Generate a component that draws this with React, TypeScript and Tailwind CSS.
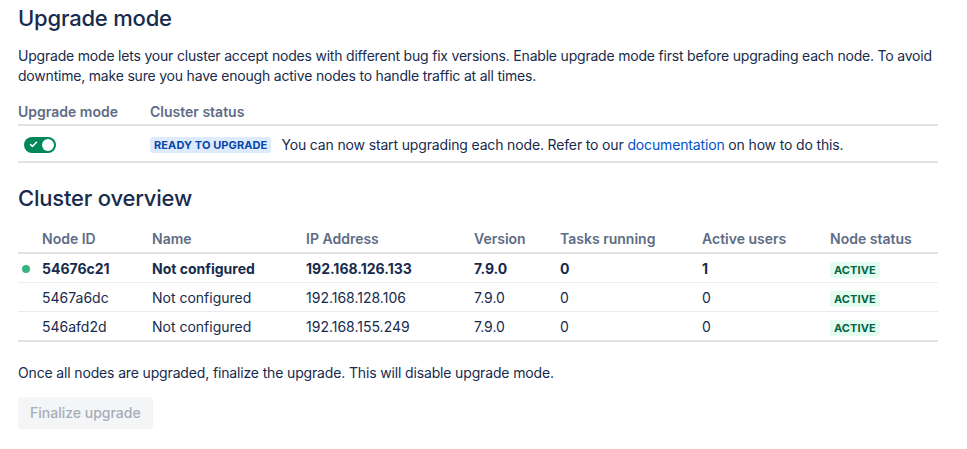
import { Check } from 'lucide-react';

const nodes = [
  { id: '54676c21', name: 'Not configured', ip: '192.168.126.133', version: '7.9.0', tasks: 0, users: 1, current: true },
  { id: '5467a6dc', name: 'Not configured', ip: '192.168.128.106', version: '7.9.0', tasks: 0, users: 0, current: false },
  { id: '546afd2d', name: 'Not configured', ip: '192.168.155.249', version: '7.9.0', tasks: 0, users: 0, current: false },
];

const cols = 'grid grid-cols-[24px_110px_154px_168px_86px_142px_128px_108px]';

function Lozenge({ children, tone }: { children: React.ReactNode; tone: 'blue' | 'green' }) {
  const cls = tone === 'blue' ? 'bg-[#deebff] text-[#0747a6]' : 'bg-[#e3fcef] text-[#006644]';
  return (
    <span className={`inline-flex h-4 items-center rounded-[3px] px-1 text-[11px] font-bold uppercase leading-4 tracking-[0.1px] ${cls}`}>
      {children}
    </span>
  );
}

function Toggle() {
  return (
    <div className="relative h-4 w-8 rounded-full bg-[#00875a]">
      <Check size={9} strokeWidth={4} className="absolute left-[5px] top-[3.5px] text-white" />
      <span className="absolute right-[2px] top-[2px] h-3 w-3 rounded-full bg-white" />
    </div>
  );
}

export default function App() {
  return (
    <div className="min-h-screen bg-white font-['Inter',sans-serif] text-sm leading-5 text-[#172b4d]">
      <div className="ml-[18px] w-[920px] pt-[4px]">
        <h1 className="text-[22px] font-medium leading-7 tracking-[-0.2px]">Upgrade mode</h1>
        <p className="mt-[14px] tracking-[-0.2px]">
          Upgrade mode lets your cluster accept nodes with different bug fix versions. Enable upgrade mode first before upgrading each node. To avoid downtime, make sure you have enough active nodes to handle traffic at all times.
        </p>

        <div className="mt-[11px]">
          <div className="flex border-b-2 border-[#dfe1e6] pb-[2px] pt-[5px] font-semibold text-[#5e6c84]">
            <div className="w-[132px]">Upgrade mode</div>
            <div>Cluster status</div>
          </div>
          <div className="flex h-[37px] items-center border-b-2 border-[#dfe1e6] pt-[2px]">
            <div className="w-[132px] pl-[6px]">
              <Toggle />
            </div>
            <div className="flex items-center gap-[10px]">
              <Lozenge tone="blue">Ready to upgrade</Lozenge>
              <span className="tracking-[-0.15px]">
                You can now start upgrading each node. Refer to our{' '}
                <a className="text-[#0052cc]" href="#">documentation</a> on how to do this.
              </span>
            </div>
          </div>
        </div>

        <h2 className="mt-[21px] text-[22px] font-medium leading-7 tracking-[-0.2px]">Cluster overview</h2>

        <div className="mt-[13px]">
          <div className={`${cols} border-b-2 border-[#dfe1e6] pb-[3px] pt-1 font-semibold text-[#5e6c84]`}>
            <div />
            <div>Node ID</div>
            <div>Name</div>
            <div>IP Address</div>
            <div>Version</div>
            <div>Tasks running</div>
            <div>Active users</div>
            <div>Node status</div>
          </div>
          {nodes.map((n, i) => (
            <div
              key={n.id}
              className={`${cols} items-center pt-[1px] ${i === nodes.length - 1 ? 'h-[30px] border-b-2 border-[#dfe1e6]' : 'h-[29px] border-b border-[#ebecf0]'} ${n.current ? 'font-bold' : ''}`}
            >
              <div className="pl-[4px]">
                {n.current && <span className="block h-2 w-2 rounded-full bg-[#36b37e]" />}
              </div>
              <div>{n.id}</div>
              <div>{n.name}</div>
              <div>{n.ip}</div>
              <div>{n.version}</div>
              <div>{n.tasks}</div>
              <div>{n.users}</div>
              <div className="font-normal">
                <Lozenge tone="green">Active</Lozenge>
              </div>
            </div>
          ))}
        </div>

        <p className="mt-[21px] tracking-[-0.15px]">Once all nodes are upgraded, finalize the upgrade. This will disable upgrade mode.</p>

        <button
          type="button"
          disabled
          className="mt-[14px] h-8 rounded-[3px] bg-[#f4f5f7] px-3 font-medium text-[#a5adba]"
        >
          Finalize upgrade
        </button>
      </div>
    </div>
  );
}
